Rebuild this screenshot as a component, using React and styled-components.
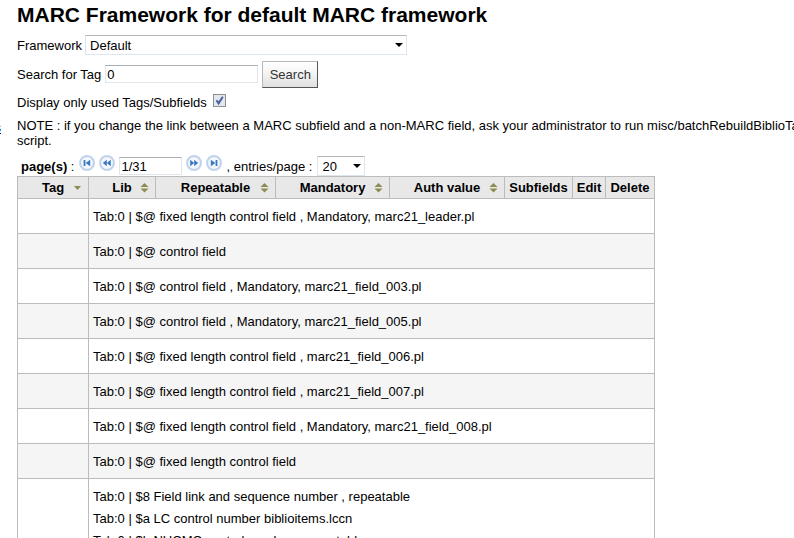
import React from 'react';
import styled, { createGlobalStyle } from 'styled-components';

const GlobalStyle = createGlobalStyle`
  * {
    box-sizing: border-box;
  }

  body {
    margin: 0;
    overflow: hidden;
    background: #ffffff;
    color: #000000;
    font: 13px/15px "Liberation Sans", Arial, sans-serif;
  }

  input,
  select,
  button {
    font: inherit;
    color: inherit;
  }
`;

const Page = styled.div`
  display: flex;
  height: 100vh;
  overflow: hidden;
`;

const Sidebar = styled.nav`
  display: flex;
  flex: 0 0 17px;
  flex-direction: column;
  padding: 120px 16px 0 0;
  overflow: hidden;
  align-items: flex-end;

  a {
    color: #0000cc;
    white-space: nowrap;
  }
`;

const Main = styled.main`
  flex: 1;
  min-width: 0;
`;

const Title = styled.h1`
  margin: 0;
  padding: 3px 0 8px;
  font-size: 21px;
  line-height: 24px;
`;

const FormRow = styled.div`
  display: flex;
  align-items: center;
  gap: ${({ $gap = 4 }) => $gap}px;
  height: ${({ $height }) => $height}px;
`;

const TextInput = styled.input`
  width: ${({ $width }) => $width}px;
  height: 18px;
  padding: 0 1px;
  border: 1px solid #e2e6ec;
  border-top-color: #abadb3;
  background: #ffffff;
`;

const SelectWrap = styled.span`
  position: relative;
  display: inline-flex;

  &::after {
    content: '';
    position: absolute;
    top: 8px;
    right: 4px;
    border: 4px solid transparent;
    border-top-color: #000000;
    border-bottom: 0;
    pointer-events: none;
  }
`;

const Select = styled.select`
  appearance: none;
  width: ${({ $width }) => $width}px;
  height: 20px;
  padding: 0 16px 0 4px;
  border: 1px solid #dde5ee;
  border-top-color: #b4b6bb;
  border-radius: 0;
  background: #ffffff;
`;

const SearchButton = styled.button`
  width: 56px;
  height: 27px;
  padding: 0;
  border: 1px solid #b8b8b8;
  border-right-color: #555555;
  border-bottom-color: #555555;
  background: linear-gradient(#ffffff, #f7f7f7 35%, #e0e0e0);
  color: #333333;
`;

const Checkbox = styled.input`
  appearance: none;
  width: 13px;
  height: 13px;
  margin: 0 0 4px;
  border: 1px solid #8e8f8f;
  background: #e4e7ec;

  &:checked {
    background: #e4e7ec
      url("data:image/svg+xml,%3Csvg xmlns='http://www.w3.org/2000/svg' viewBox='0 0 11 11'%3E%3Cpath d='M2.5 5.2 4.6 8.4 8.8 1.8' fill='none' stroke='%234660a0' stroke-width='2'/%3E%3C/svg%3E");
  }
`;

const Note = styled.p`
  margin: 0;
  padding: 7px 0 8px;
  white-space: nowrap;
`;

const Pager = styled.div`
  display: flex;
  align-items: center;
  height: 20px;
  padding-left: 4px;
  gap: 4px;

  label {
    margin-right: 1px;
  }
`;

const PagerButton = styled.button`
  display: flex;
  width: 16px;
  height: 16px;
  padding: 0;
  margin-bottom: 6px;
  border: 0;
  background: none;
`;

const Table = styled.table`
  width: 638px;
  border-collapse: collapse;
  table-layout: fixed;
`;

const HeaderCell = styled.th`
  position: relative;
  height: 22px;
  padding: 0;
  border: 1px solid #bcbcbc;
  background: #e8e8e8;
  text-align: center;
  white-space: nowrap;
`;

const SortMark = styled.svg`
  position: absolute;
  top: 6px;
  right: 6px;
`;

const Row = styled.tr`
  background: #ffffff;

  &:nth-child(even) {
    background: #f5f5f5;
  }
`;

const Cell = styled.td`
  padding: 7px 4px 5px;
  border: 1px solid #bcbcbc;
  line-height: 22px;
`;

const columns = [
  { label: 'Tag', width: 71, sort: 'down' },
  { label: 'Lib', width: 67, sort: 'both' },
  { label: 'Repeatable', width: 120, sort: 'both' },
  { label: 'Mandatory', width: 114, sort: 'both' },
  { label: 'Auth value', width: 115, sort: 'both' },
  { label: 'Subfields', width: 68 },
  { label: 'Edit', width: 33 },
  { label: 'Delete', width: 49 },
];

const rows = [
  ['Tab:0 | $@ fixed length control field , Mandatory, marc21_leader.pl'],
  ['Tab:0 | $@ control field'],
  ['Tab:0 | $@ control field , Mandatory, marc21_field_003.pl'],
  ['Tab:0 | $@ control field , Mandatory, marc21_field_005.pl'],
  ['Tab:0 | $@ fixed length control field , marc21_field_006.pl'],
  ['Tab:0 | $@ fixed length control field , marc21_field_007.pl'],
  ['Tab:0 | $@ fixed length control field , Mandatory, marc21_field_008.pl'],
  ['Tab:0 | $@ fixed length control field'],
  [
    'Tab:0 | $8 Field link and sequence number , repeatable',
    'Tab:0 | $a LC control number biblioitems.lccn',
    'Tab:0 | $b NUCMC control number , repeatable',
  ],
];

const pagerShapes = {
  first: 'M4.6 5h1.8v6H4.6z M11.2 4.8v6.4L6.6 8z',
  previous: 'M7.8 4.8v6.4L3.8 8z M11.8 4.8v6.4L7.8 8z',
  next: 'M4.2 4.8v6.4L8.2 8z M8.2 4.8v6.4l4-3.2z',
  last: 'M4.8 4.8v6.4L9.4 8z M9.6 5h1.8v6H9.6z',
};

const PagerIcon = ({ name }) => (
  <PagerButton type="button" aria-label={`${name} page`}>
    <svg width="16" height="16" viewBox="0 0 16 16">
      <circle cx="8" cy="8" r="7.2" fill="#f4f8fd" stroke="#c3d7f0" strokeWidth="1.6" />
      <circle cx="8" cy="8" r="6.4" fill="none" stroke="#a9b9d2" strokeWidth="0.6" />
      <path d={pagerShapes[name]} fill="#3b78c3" />
    </svg>
  </PagerButton>
);

const SortIcon = ({ type }) => (
  <SortMark width="9" height="10" viewBox="0 0 9 10">
    {type === 'both' ? (
      <path d="M4.5 0 8.5 4h-8z M.5 5.5h8l-4 4z" fill="#8b8b52" />
    ) : (
      <path d="M1 3h7L4.5 7z" fill="#8b8b52" />
    )}
  </SortMark>
);

const App = () => (
  <>
    <GlobalStyle />
    <Page>
      <Sidebar>
        <a href="#frameworks">s</a>
      </Sidebar>
      <Main>
        <Title>MARC Framework for default MARC framework</Title>
        <FormRow $height={20} $gap={3}>
          <label htmlFor="framework">Framework</label>
          <SelectWrap>
            <Select id="framework" $width={322}>
              <option>Default</option>
            </Select>
          </SelectWrap>
        </FormRow>
        <FormRow $height={38}>
          <label htmlFor="searchfield">Search for Tag</label>
          <TextInput id="searchfield" $width={153} defaultValue="0" />
          <SearchButton type="button">Search</SearchButton>
        </FormRow>
        <FormRow $height={18} $gap={6}>
          <label htmlFor="select_display">Display only used Tags/Subfields</label>
          <Checkbox id="select_display" type="checkbox" defaultChecked />
        </FormRow>
        <Note>
          NOTE : if you change the link between a MARC subfield and a non-MARC field, ask your administrator to run
          misc/batchRebuildBiblioTables.pl
          <br />
          script.
        </Note>
        <Pager>
          <label htmlFor="page">
            <b>page(s)</b> :
          </label>
          <PagerIcon name="first" />
          <PagerIcon name="previous" />
          <TextInput id="page" $width={63} defaultValue="1/31" />
          <PagerIcon name="next" />
          <PagerIcon name="last" />
          <label htmlFor="pagesize">, entries/page :</label>
          <SelectWrap>
            <Select id="pagesize" $width={48}>
              <option>20</option>
            </Select>
          </SelectWrap>
        </Pager>
        <Table>
          <colgroup>
            {columns.map((column) => (
              <col key={column.label} style={{ width: column.width }} />
            ))}
          </colgroup>
          <thead>
            <tr>
              {columns.map((column) => (
                <HeaderCell key={column.label}>
                  {column.label}
                  {column.sort && <SortIcon type={column.sort} />}
                </HeaderCell>
              ))}
            </tr>
          </thead>
          <tbody>
            {rows.map((lines, index) => (
              <Row key={index}>
                <Cell />
                <Cell colSpan={7}>
                  {lines.map((line) => (
                    <div key={line}>{line}</div>
                  ))}
                </Cell>
              </Row>
            ))}
          </tbody>
        </Table>
      </Main>
    </Page>
  </>
);

export default App;
